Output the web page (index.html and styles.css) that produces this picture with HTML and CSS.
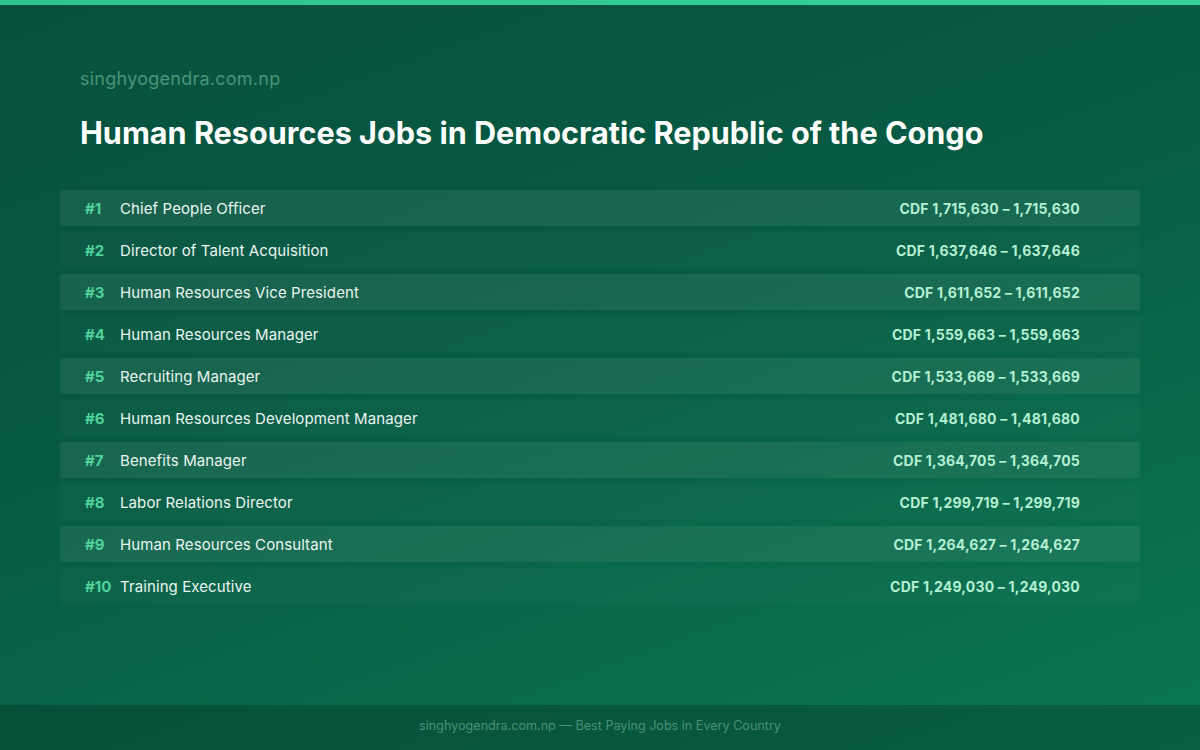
FILE: index.html
```html
<!DOCTYPE html>
<html lang="en">
<head>
<meta charset="utf-8">
<title>Human Resources Jobs in Democratic Republic of the Congo</title>
<link rel="stylesheet" href="styles.css">
</head>
<body>
<div class="page">
  <div class="topbar"></div>
  <main class="main">
    <div class="site">singhyogendra.com.np</div>
    <h1 class="title">Human Resources Jobs in Democratic Republic of the Congo</h1>
    <ul class="list">
      <li class="row odd"><span class="rank">#1</span><span class="name">Chief People Officer</span><span class="pay">CDF 1,715,630 – 1,715,630</span></li>
      <li class="row"><span class="rank">#2</span><span class="name">Director of Talent Acquisition</span><span class="pay">CDF 1,637,646 – 1,637,646</span></li>
      <li class="row odd"><span class="rank">#3</span><span class="name">Human Resources Vice President</span><span class="pay">CDF 1,611,652 – 1,611,652</span></li>
      <li class="row"><span class="rank">#4</span><span class="name">Human Resources Manager</span><span class="pay">CDF 1,559,663 – 1,559,663</span></li>
      <li class="row odd"><span class="rank">#5</span><span class="name">Recruiting Manager</span><span class="pay">CDF 1,533,669 – 1,533,669</span></li>
      <li class="row"><span class="rank">#6</span><span class="name">Human Resources Development Manager</span><span class="pay">CDF 1,481,680 – 1,481,680</span></li>
      <li class="row odd"><span class="rank">#7</span><span class="name">Benefits Manager</span><span class="pay">CDF 1,364,705 – 1,364,705</span></li>
      <li class="row"><span class="rank">#8</span><span class="name">Labor Relations Director</span><span class="pay">CDF 1,299,719 – 1,299,719</span></li>
      <li class="row odd"><span class="rank">#9</span><span class="name">Human Resources Consultant</span><span class="pay">CDF 1,264,627 – 1,264,627</span></li>
      <li class="row"><span class="rank">#10</span><span class="name">Training Executive</span><span class="pay">CDF 1,249,030 – 1,249,030</span></li>
    </ul>
  </main>
  <footer class="footer">singhyogendra.com.np — Best Paying Jobs in Every Country</footer>
</div>
</body>
</html>
```

FILE: styles.css
```css
* { box-sizing: border-box; }
html, body { margin: 0; padding: 0; }
body {
  width: 1200px;
  height: 750px;
  overflow: hidden;
  font-family: Inter, "Noto Sans", sans-serif;
}
.page {
  width: 1200px;
  height: 750px;
  display: flex;
  flex-direction: column;
  background: linear-gradient(160deg, #06513e 0%, #075a43 40%, #0a7752 100%);
}
.topbar {
  height: 5px;
  flex: none;
  background: linear-gradient(90deg, #2ec48c, #34d399);
}
.main {
  flex: 1;
  padding: 63px 60px 0 60px;
}
.site {
  padding-left: 20px;
  font-size: 18px;
  line-height: 22px;
  color: #4b9479;
  letter-spacing: 0.25px;
}
.title {
  margin: 25px 0 0 0;
  padding-left: 20px;
  font-size: 30.6px;
  line-height: 36px;
  font-weight: 700;
  color: #ffffff;
  letter-spacing: 0;
}
.list {
  list-style: none;
  margin: 39px 0 0 0;
  padding: 0;
  display: flex;
  flex-direction: column;
  gap: 6px;
}
.row {
  height: 36px;
  display: flex;
  align-items: center;
  padding: 0 60px 0 25px;
  border-radius: 4px;
  background: rgba(255, 255, 255, 0.025);
}
.row.odd {
  background: rgba(255, 255, 255, 0.07);
}
.rank {
  width: 35px;
  flex: none;
  font-size: 15px;
  font-weight: 700;
  color: #4fd39a;
}
.name {
  flex: 1;
  font-size: 15px;
  letter-spacing: 0.1px;
  color: #eaf5f0;
}
.pay {
  font-size: 14px;
  font-weight: 700;
  letter-spacing: 0.2px;
  color: #b5f0d3;
}
.footer {
  height: 45px;
  flex: none;
  display: flex;
  align-items: center;
  justify-content: center;
  padding-bottom: 5px;
  background: rgba(0, 0, 0, 0.2);
  font-size: 12.6px;
  color: #4a9077;
}
```
